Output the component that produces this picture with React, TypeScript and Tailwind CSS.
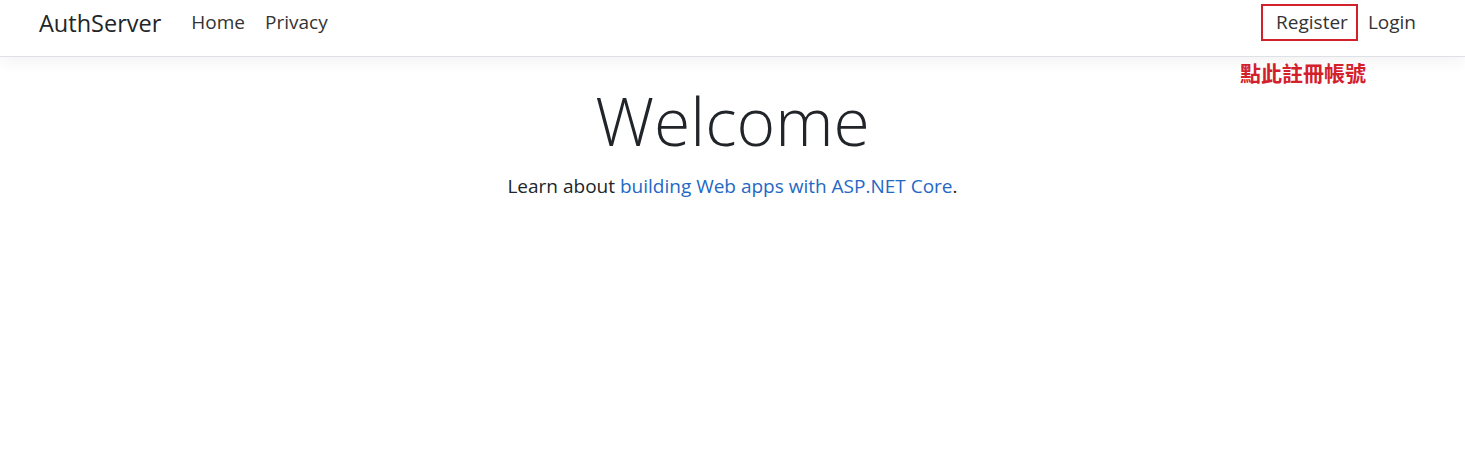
export default function App() {
  return (
    <div
      className="min-h-[456px] bg-white text-[#212529]"
      style={{ fontFamily: '"Segoe UI", "Open Sans", "Noto Sans CJK TC", sans-serif' }}
    >
      {/* Navbar */}
      <header className="h-[57px] border-b border-[#dee2e6] bg-white shadow-[0_5px_15px_rgba(0,0,0,0.05)]">
        <nav className="flex h-full items-start px-[39px] pt-[7px]">
          <a className="mr-[20px] mt-[1px] text-[23.5px] leading-[30px] text-[#212529]">AuthServer</a>
          <ul className="flex flex-1 items-start">
            <li>
              <a className="block px-[10px] text-[19px] leading-[30px] text-[#333]">Home</a>
            </li>
            <li>
              <a className="block px-[10px] text-[19px] leading-[30px] text-[#333]">Privacy</a>
            </li>
          </ul>
          <ul className="flex items-start">
            <li className="relative">
              <a className="block px-[10px] text-[19px] leading-[30px] text-[#333]">Register</a>
              {/* annotation box */}
              <div className="absolute -left-[5px] right-0 -top-[3px] h-[37px] border-2 border-[#d3212c]" />
              <div
                className="absolute -left-[26px] top-[55px] whitespace-nowrap text-[21px] font-bold leading-none text-[#d3212c]"
                style={{ fontFamily: '"Noto Sans CJK TC", sans-serif' }}
              >
                點此註冊帳號
              </div>
            </li>
            <li>
              <a className="block px-[10px] text-[19px] leading-[30px] text-[#333]">Login</a>
            </li>
          </ul>
        </nav>
      </header>

      {/* Main */}
      <main className="mt-[24px] text-center">
        <h1 className="text-[66px] font-light leading-[1.2] text-[#212529]">Welcome</h1>
        <p className="mt-[12px] text-[19px] leading-[1.5] text-[#212529]">
          Learn about <a className="text-[#2468c4]">building Web apps with ASP.NET Core</a>.
        </p>
      </main>
    </div>
  );
}
